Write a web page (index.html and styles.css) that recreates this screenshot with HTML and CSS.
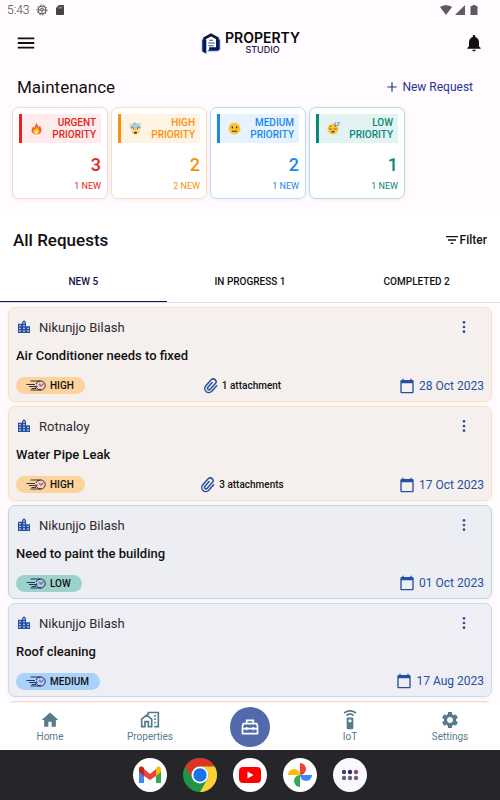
FILE: index.html
```html
<!DOCTYPE html>
<html lang="en">
<head>
<meta charset="utf-8">
<meta name="viewport" content="width=device-width, initial-scale=1">
<title>Maintenance</title>
<link rel="stylesheet" href="styles.css">
</head>
<body>
<svg class="sprite" aria-hidden="true">
  <symbol id="city" viewBox="0 0 24 24"><path d="M15 11V5l-3-3-3 3v2H3v14h18V11h-6zm-8 8H5v-2h2v2zm0-4H5v-2h2v2zm0-4H5V9h2v2zm6 8h-2v-2h2v2zm0-4h-2v-2h2v2zm0-4h-2V9h2v2zm0-4h-2V5h2v2zm6 12h-2v-2h2v2zm0-4h-2v-2h2v2z"/></symbol>
  <symbol id="more" viewBox="0 0 24 24"><circle cx="12" cy="5" r="2"/><circle cx="12" cy="12" r="2"/><circle cx="12" cy="19" r="2"/></symbol>
  <symbol id="calendar" viewBox="0 0 24 24"><path d="M20 3h-1V1h-2v2H7V1H5v2H4c-1.100 0-2 .9-2 2v16c0 1.100.9 2 2 2h16c1.100 0 2-.9 2-2V5c0-1.100-.9-2-2-2zm0 18H4V8h16v13z"/></symbol>
  <symbol id="clip" viewBox="0 0 24 24"><g transform="rotate(42 12 12)" fill="none" stroke="currentColor" stroke-width="2.200" stroke-linecap="round"><path d="M18 6v11a6 6 0 0 1-12 0V5a4.200 4.200 0 0 1 8.400 0v11.500a2.300 2.300 0 0 1-4.600 0V7"/></g></symbol>
  <symbol id="speed" viewBox="0 0 42 22"><g fill="none" stroke="#1d1d4f" stroke-width="1.800"><path d="M9 2h20M1 9h17M6 13h14M11 17h9M9 20h21"/><path d="M29 2a9 9 0 0 1 1 18 9 9 0 0 1-9-5M20 8a9 9 0 0 1 9-6"/><path d="M20 16v-4h3"/></g><path d="m26 8 4 4 5-5" fill="none" stroke="#b04fd0" stroke-width="2.500"/></symbol>
</svg>
<div class="app">
  <div class="status">
    <div class="status-side">
      <span>5:43</span>
      <svg class="i12" viewBox="0 0 24 24" fill="none" stroke="#555" stroke-width="2"><circle cx="12" cy="12" r="8"/><circle cx="12" cy="12" r="10" stroke-dasharray="3 3"/><path d="M4 12h16M12 12v8M9 11a3 3 0 0 1 6 0"/></svg>
      <svg class="i12" viewBox="0 0 24 24" fill="#555"><path d="M18 2h-8L4 8v12c0 1.100.9 2 2 2h12c1.100 0 2-.9 2-2V4c0-1.100-.9-2-2-2z"/><path d="M10 6v3M13 5v4M16 5v4" stroke="#bbb" stroke-width="1.500"/></svg>
    </div>
    <div class="status-side status-right">
      <svg class="i12" viewBox="0 0 24 24"><path d="M12 22 0 6C7 1 17 1 24 6z"/></svg>
      <svg class="i12" viewBox="0 0 24 24"><path d="M22 2v20H2z"/></svg>
      <svg class="i12" viewBox="0 0 24 24"><path d="M9 2h6v2h4v18H5V4h4z"/></svg>
    </div>
  </div>
  <header class="topbar">
    <button class="icon-btn" aria-label="Menu"><svg class="i22" viewBox="0 0 24 24"><path d="M3 18h18v-2H3v2zm0-5h18v-2H3v2zm0-7v2h18V6H3z"/></svg></button>
    <div class="brand">
      <svg class="brand-mark" viewBox="0 0 20 24"><path d="M0 8v13l5 3V9z" fill="#2450b0"/><path d="M16 9v9H9l-3 3h11l3-2V8z" fill="#2450b0"/><path d="M3 22V7l7-4 7 4v11H8" fill="none" stroke="#0b1645" stroke-width="3"/><path d="M8 9h4M7 12h7M7 15h6" stroke="#263d76" stroke-width="1"/></svg>
      <div class="brand-text"><span class="brand-name">PROPERTY</span><span class="brand-sub">STUDIO</span></div>
    </div>
    <button class="icon-btn" aria-label="Notifications"><svg class="i20" viewBox="0 0 24 24"><path d="M12 22c1.100 0 2-.9 2-2h-4c0 1.100.9 2 2 2zm6-6v-5c0-3.070-1.640-5.640-4.500-6.320V4c0-.83-.67-1.500-1.500-1.500s-1.500.67-1.500 1.500v.68C7.630 5.360 6 7.920 6 11v5l-2 2v1h16v-1l-2-2z"/></svg></button>
  </header>
  <section class="overview">
    <div class="overview-head">
      <h1>Maintenance</h1>
      <button class="new-request"><svg class="i14" viewBox="0 0 24 24"><path d="M20 13h-7v7h-2v-7H4v-2h7V4h2v7h7z"/></svg>New Request</button>
    </div>
    <div class="stats">
      <article class="stat urgent">
        <div class="stat-head"><svg class="emoji" viewBox="0 0 24 24"><path d="M12 1c1 5 4 5 4 9l2-3c3 4 4 7 3 10-2 8-16 8-18 0-1-4 2-6 3-9l2 3c1-4 3-6 4-10z" fill="#ee652f"/><path d="M12 8c0 4 5 5 5 10-1 6-10 6-11 0 0-3 2-4 3-6l1 3c1-2 2-4 2-7z" fill="#ffca28"/><path d="M12 15c3 3 2 6 0 6s-4-3 0-6z" fill="#fff3ad"/></svg><h2>URGENT PRIORITY</h2></div>
        <strong>3</strong><small>1 NEW</small>
      </article>
      <article class="stat high">
        <div class="stat-head"><svg class="emoji" viewBox="0 0 24 24"><path d="M3 10c2 17 16 17 18 0z" fill="#fcc63a"/><path d="M3 12C-1 9 2 5 5 6c1-6 7-5 8-3 4-3 7 1 6 3 5 1 4 5 2 6l-5-2-3 2-4-2-3 2z" fill="#a9cbd4"/><path d="m1 3 3 3M22 2l-3 3M11 0v4" stroke="#77a85e"/><circle cx="8" cy="14" r="3" fill="#fff"/><circle cx="16" cy="14" r="3" fill="#fff"/><circle cx="8" cy="14" r="1" fill="#423126"/><circle cx="16" cy="14" r="1" fill="#423126"/><path d="m5 10 5 2m9-2-5 2" stroke="#693c28" stroke-width="1.500"/><ellipse cx="12" cy="20" rx="3" ry="2" fill="#6b3625"/></svg><h2>HIGH PRIORITY</h2></div>
        <strong>2</strong><small>2 NEW</small>
      </article>
      <article class="stat medium">
        <div class="stat-head"><svg class="emoji" viewBox="0 0 24 24"><circle cx="12" cy="12" r="11" fill="#fcc735"/><ellipse cx="8" cy="10" rx="1.500" ry="2" fill="#49372b"/><ellipse cx="16" cy="10" rx="1.500" ry="2" fill="#49372b"/><path d="M7 17h10" stroke="#49372b" stroke-width="2"/></svg><h2>MEDIUM PRIORITY</h2></div>
        <strong>2</strong><small>1 NEW</small>
      </article>
      <article class="stat low">
        <div class="stat-head"><svg class="emoji" viewBox="0 0 24 24"><circle cx="11" cy="13" r="10" fill="#fcc735"/><path d="M4 12c2 2 4 2 5 0m4 0c2 2 4 2 5 0M5 9l3-2m6 0 3 1" fill="none" stroke="#5b3c25" stroke-width="1.500"/><ellipse cx="11" cy="18" rx="3" ry="2" fill="#704127"/><path d="M13 2h4l-4 4h4M19 1h4l-4 5h4" fill="none" stroke="#6683dd" stroke-width="1.500"/></svg><h2>LOW PRIORITY</h2></div>
        <strong>1</strong><small>1 NEW</small>
      </article>
    </div>
  </section>
  <section class="requests">
    <div class="requests-head">
      <h2>All Requests</h2>
      <button class="filter"><svg class="i16" viewBox="0 0 24 24"><path d="M10 18h4v-2h-4v2zM3 6v2h18V6H3zm3 7h12v-2H6v2z"/></svg>Filter</button>
    </div>
    <div class="tabs" role="tablist">
      <button role="tab" aria-selected="true">NEW 5</button>
      <button role="tab" aria-selected="false">IN PROGRESS 1</button>
      <button role="tab" aria-selected="false">COMPLETED 2</button>
    </div>
    <div class="list">
      <article class="card high">
        <div class="card-top"><svg class="i16"><use href="#city"/></svg><span>Nikunjjo Bilash</span><button class="icon-btn more" aria-label="More options"><svg class="i16"><use href="#more"/></svg></button></div>
        <h3>Air Conditioner needs to fixed</h3>
        <div class="card-foot attached"><span class="pill"><svg class="speed"><use href="#speed"/></svg>HIGH</span><span class="attachment"><svg class="i16"><use href="#clip"/></svg>1 attachment</span><time class="date" datetime="2023-10-28"><svg class="i16"><use href="#calendar"/></svg>28 Oct 2023</time></div>
      </article>
      <article class="card high">
        <div class="card-top"><svg class="i16"><use href="#city"/></svg><span>Rotnaloy</span><button class="icon-btn more" aria-label="More options"><svg class="i16"><use href="#more"/></svg></button></div>
        <h3>Water Pipe Leak</h3>
        <div class="card-foot attached"><span class="pill"><svg class="speed"><use href="#speed"/></svg>HIGH</span><span class="attachment"><svg class="i16"><use href="#clip"/></svg>3 attachments</span><time class="date" datetime="2023-10-17"><svg class="i16"><use href="#calendar"/></svg>17 Oct 2023</time></div>
      </article>
      <article class="card low">
        <div class="card-top"><svg class="i16"><use href="#city"/></svg><span>Nikunjjo Bilash</span><button class="icon-btn more" aria-label="More options"><svg class="i16"><use href="#more"/></svg></button></div>
        <h3>Need to paint the building</h3>
        <div class="card-foot"><span class="pill"><svg class="speed"><use href="#speed"/></svg>LOW</span><time class="date" datetime="2023-10-01"><svg class="i16"><use href="#calendar"/></svg>01 Oct 2023</time></div>
      </article>
      <article class="card medium">
        <div class="card-top"><svg class="i16"><use href="#city"/></svg><span>Nikunjjo Bilash</span><button class="icon-btn more" aria-label="More options"><svg class="i16"><use href="#more"/></svg></button></div>
        <h3>Roof cleaning</h3>
        <div class="card-foot"><span class="pill"><svg class="speed"><use href="#speed"/></svg>MEDIUM</span><time class="date" datetime="2023-08-17"><svg class="i16"><use href="#calendar"/></svg>17 Aug 2023</time></div>
      </article>
      <div class="card urgent" aria-hidden="true"></div>
    </div>
  </section>
  <nav class="nav">
    <a href="#"><svg class="i20" viewBox="0 0 24 24"><path d="M10 20v-6h4v6h5v-8h3L12 3 2 12h3v8z"/></svg>Home</a>
    <a href="#"><svg class="i20" viewBox="0 0 24 24" fill="none" stroke="currentColor" stroke-width="2"><path d="M2 20v-9l6-5 6 5v9h-4v-6H6v6zM10 6V3h12v17h-5"/><path d="M17 7h2m-2 4h2m-2 4h2"/></svg>Properties</a>
    <a href="#" class="nav-main" aria-label="Maintenance"><svg class="i20" viewBox="0 0 24 24" fill="none" stroke="currentColor" stroke-width="2"><path d="M8 8V4h8v4M4 8h16l1 3v9H3v-9zM3 14h18M8 12v4m8-4v4"/></svg></a>
    <a href="#"><svg class="i20" viewBox="0 0 24 24"><path d="M15 9H9c-.55 0-1 .45-1 1v12c0 .55.45 1 1 1h6c.55 0 1-.45 1-1V10c0-.55-.45-1-1-1zm-3 6c-1.100 0-2-.9-2-2s.9-2 2-2 2 .9 2 2-.9 2-2 2zM7.050 6.050l1.410 1.410C9.370 6.560 10.620 6 12 6s2.630.56 3.540 1.460l1.410-1.410C15.680 4.780 13.930 4 12 4s-3.680.78-4.950 2.050zM12 0C8.960 0 6.210 1.230 4.220 3.220l1.410 1.410C7.260 3.010 9.510 2 12 2s4.740 1.010 6.360 2.640l1.410-1.410C17.790 1.230 15.040 0 12 0z"/></svg>IoT</a>
    <a href="#"><svg class="i20" viewBox="0 0 24 24"><path d="M19.140 12.940c.04-.3.06-.61.06-.94 0-.32-.02-.64-.07-.94l2.030-1.580c.18-.14.23-.41.12-.61l-1.920-3.320c-.12-.22-.37-.29-.59-.22l-2.390.96c-.5-.38-1.030-.7-1.620-.94l-.36-2.540c-.04-.24-.24-.41-.48-.41h-3.840c-.24 0-.43.17-.47.41l-.36 2.540c-.59.24-1.130.57-1.620.94l-2.390-.96c-.22-.08-.47 0-.59.22L2.740 8.870c-.12.21-.08.47.12.61l2.030 1.580c-.05.3-.09.63-.09.94s.02.64.07.94l-2.030 1.580c-.18.14-.23.41-.12.61l1.920 3.320c.12.22.37.29.59.22l2.390-.96c.5.38 1.030.7 1.620.94l.36 2.540c.05.24.24.41.48.41h3.840c.24 0 .44-.17.47-.41l.36-2.540c.59-.24 1.130-.56 1.620-.94l2.390.96c.22.08.47 0 .59-.22l1.920-3.320c.12-.22.07-.47-.12-.61l-2.010-1.580zM12 15.600c-1.980 0-3.600-1.620-3.600-3.600s1.620-3.600 3.600-3.600 3.600 1.620 3.600 3.600-1.620 3.600-3.600 3.600z"/></svg>Settings</a>
  </nav>
  <div class="dock">
    <a href="#" aria-label="Gmail"><svg viewBox="0 0 34 34"><circle cx="17" cy="17" r="17" fill="#fff"/><path d="M6 11v14h5V15z" fill="#4285f4"/><path d="M28 11v14h-5V15z" fill="#34a853"/><path d="M11 11v7l6 4 6-4v-7l-6 5z" fill="#ea4335"/><path d="M6 11c0-3 3-3 5-1v8l-5-4z" fill="#c5221f"/><path d="M28 11c0-3-3-3-5-1v8l5-4z" fill="#fbbc04"/></svg></a>
    <a href="#" aria-label="Chrome"><svg viewBox="0 0 34 34"><circle cx="17" cy="17" r="17" fill="#209447"/><path d="M2.300 8.500a17 17 0 0 1 29.400 0H17a8.500 8.500 0 0 0-7.400 12.700z" fill="#de3427"/><path d="M31.700 8.500A17 17 0 0 1 17 34l7.400-12.800A8.500 8.500 0 0 0 17 8.500z" fill="#fdd033"/><circle cx="17" cy="17" r="8.500" fill="#fff"/><circle cx="17" cy="17" r="6.700" fill="#1a73e8"/></svg></a>
    <a href="#" aria-label="YouTube"><svg viewBox="0 0 34 34"><circle cx="17" cy="17" r="17" fill="#fff"/><rect x="6" y="9" width="22" height="16" rx="4" fill="#f00"/><path d="m14.500 13.500 6 3.500-6 3.500z" fill="#fff"/></svg></a>
    <a href="#" aria-label="Photos"><svg viewBox="0 0 34 34"><circle cx="17" cy="17" r="17" fill="#fff"/><path d="M17 5a6 6 0 0 1 0 12z" fill="#ea4335"/><path d="M29 17a6 6 0 0 1-12 0z" fill="#4285f4"/><path d="M17 29a6 6 0 0 1 0-12z" fill="#34a853"/><path d="M5 17a6 6 0 0 1 12 0z" fill="#fbbc04"/></svg></a>
    <a href="#" aria-label="All apps"><svg viewBox="0 0 34 34"><circle cx="17" cy="17" r="17" fill="#fcf7ff"/><g fill="#686377"><circle cx="11" cy="14" r="2.200" fill="#3c3f7a"/><circle cx="17" cy="14" r="2.200" fill="#282d76"/><circle cx="23" cy="14" r="2.200" fill="#805072"/><circle cx="11" cy="20" r="2.200"/><circle cx="17" cy="20" r="2.200"/><circle cx="23" cy="20" r="2.200"/></g></svg></a>
  </div>
</div>
</body>
</html>
```
FILE: styles.css
```css
* { box-sizing: border-box; }
body { margin: 0; font-family: Roboto, "Liberation Sans", sans-serif; color: #111; background: #fffbff; }
h1, h2, h3 { margin: 0; font-weight: 500; }
button { margin: 0; padding: 0; border: 0; background: none; color: inherit; font: inherit; cursor: pointer; }
a { color: inherit; text-decoration: none; }
svg { display: block; flex: none; fill: currentColor; }
svg[fill="none"] { fill: none; }
.sprite { position: absolute; width: 0; height: 0; }
.i12 { width: 12px; height: 12px; }
.i14 { width: 14px; height: 14px; }
.i16 { width: 16px; height: 16px; }
.i20 { width: 20px; height: 20px; }
.i22 { width: 22px; height: 22px; }

.app { display: flex; flex-direction: column; height: 100vh; }
.status { display: flex; justify-content: space-between; align-items: center; height: 20px; padding: 0 20px 0 7px; font-size: 12px; font-weight: 300; color: #444; }
.status-side { display: flex; align-items: center; gap: 6px; }
.status-right { gap: 2px; color: #5e5b60; }

.topbar { display: flex; align-items: center; justify-content: space-between; height: 46px; padding: 0 16px 0 15px; }
.brand { display: flex; align-items: center; gap: 4px; }
.brand-mark { width: 20px; height: 22px; fill: none; }
.brand-text { display: flex; flex-direction: column; align-items: center; font-family: Inter, sans-serif; }
.brand-name { font-size: 14px; line-height: 14px; font-weight: 600; color: #080808; }
.brand-sub { font-size: 9px; line-height: 10px; font-weight: 500; color: #15154d; }

.overview { padding: 0 11px 17px; }
.overview-head { display: flex; align-items: center; justify-content: space-between; height: 41px; padding: 0 16px 0 6px; }
.overview-head h1 { font-size: 17px; font-weight: 400; }
.new-request { display: flex; align-items: center; gap: 3px; font-size: 12px; color: #1f3495; font-weight: 400; }
.stats { display: grid; grid-template-columns: repeat(4, minmax(0, 96px)); gap: 3px; padding-left: 1px; }

.urgent { --c: #e32420; --line: #fcd5d5; --tint: #feebeb; --bg: #f9eeee; }
.high { --c: #f9900d; --line: #fde0b8; --tint: #fff3e3; --bg: #f5f0ee; --pill: #fcd39c; }
.medium { --c: #1b88ec; --line: #c0dcf6; --tint: #e6f3ff; --bg: #f0eef5; --pill: #a8d2f8; }
.low { --c: #078879; --line: #b5dcd6; --tint: #e3f3f1; --bg: #edeef3; --pill: #9bd2cc; }

.stat { display: flex; flex-direction: column; align-items: flex-end; padding: 6px; border: 1px solid var(--line); border-radius: 7px; background: #fff; color: var(--c); box-shadow: 0 1px 5px #0000000f; }
.stat-head { display: flex; align-items: center; justify-content: space-between; width: 100%; height: 29px; padding: 0 5px 0 8px; border-left: 3px solid var(--c); background: var(--tint); }
.emoji { width: 13px; height: 13px; }
.stat-head h2 { width: min-content; font-size: 10px; line-height: 12px; text-align: right; }
.stat strong { margin-top: 12px; font-size: 18px; line-height: 20px; font-weight: 500; }
.stat small { margin-top: 5px; font-size: 9px; line-height: 12px; font-weight: 400; }

.requests { display: flex; flex-direction: column; flex: 1; min-height: 0; background: #fff; }
.requests-head { display: flex; align-items: center; justify-content: space-between; height: 48px; padding: 0 13px; }
.requests-head h2 { font-size: 17px; }
.filter { display: flex; align-items: center; font-size: 12px; font-weight: 500; }
.tabs { display: grid; grid-template-columns: repeat(3, 1fr); border-bottom: 1px solid #dddde7; }
.tabs button { height: 38px; padding-bottom: 2px; border-bottom: 1px solid transparent; font-size: 10px; font-weight: 500; }
.tabs [aria-selected="true"] { border-color: #0f1250; color: #0f1250; }
.list { display: flex; flex-direction: column; gap: 4px; flex: 1; min-height: 0; overflow: hidden; padding: 4px 8px 0; background: #fffbff; }
.card { flex: none; min-height: 20px; padding: 9px 7px 6px; border: 1px solid var(--line); border-radius: 7px; background: var(--bg); box-shadow: 0 1px 5px #0000000c; }
.card-top { display: flex; align-items: center; gap: 7px; height: 20px; color: #2450a3; font-size: 13px; }
.card-top span { color: #2d2b31; font-weight: 400; }
.more { margin-left: auto; margin-right: 12px; }
.card h3 { margin-top: 10px; font-size: 13px; line-height: 18px; }
.card-foot { display: flex; align-items: center; justify-content: space-between; height: 18px; margin-top: 11px; }
.card-foot.attached { height: 19px; }
.pill { display: flex; align-items: center; gap: 3px; height: 17px; padding: 0 11px 0 10px; border-radius: 9px; background: var(--pill); font-size: 10px; font-weight: 500; }
.speed { width: 21px; height: 11px; }
.attachment { display: flex; align-items: center; gap: 3px; font-size: 10px; font-weight: 500; }
.attachment svg { color: #2450a3; }
.date { display: flex; align-items: center; gap: 4px; color: #2450a3; font-size: 12px; }

.nav { display: grid; grid-template-columns: repeat(5, 1fr); height: 47px; background: #fff; color: #557b8c; font-size: 10px; line-height: 12px; }
.nav a { display: flex; flex-direction: column; align-items: center; justify-content: center; gap: 1px; }
.nav .nav-main { width: 40px; height: 40px; border-radius: 50%; place-self: center; background: #5269ab; color: #fff; }
.dock { display: flex; align-items: center; justify-content: center; gap: 16px; height: 50px; background: #262529; }
.dock svg { width: 34px; height: 34px; }
```
